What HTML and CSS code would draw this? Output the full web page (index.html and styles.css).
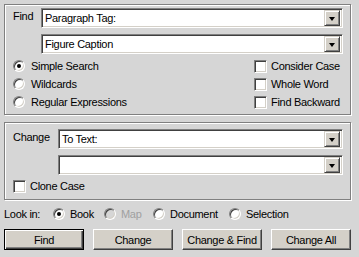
FILE: index.html
```html
<!DOCTYPE html>
<html lang="en">
<head>
    <meta charset="UTF-8">
    <title>Find/Change</title>
    <link rel="stylesheet" href="styles.css">
</head>
<body>
<div class="dialog">

    <div class="group find-group">
        <div class="combo-rows">
            <div class="group-label">Find</div>
            <div class="combo">
                <span class="combo-text">Paragraph Tag:</span>
                <span class="combo-btn"><span class="arrow"></span></span>
            </div>
            <div></div>
            <div class="combo">
                <span class="combo-text">Figure Caption</span>
                <span class="combo-btn"><span class="arrow"></span></span>
            </div>
        </div>

        <div class="options">
            <div class="opt-col">
                <label class="opt"><span class="radio checked"></span>Simple Search</label>
                <label class="opt"><span class="radio"></span>Wildcards</label>
                <label class="opt"><span class="radio"></span>Regular Expressions</label>
            </div>
            <div class="opt-col checks">
                <label class="opt"><span class="check"></span>Consider Case</label>
                <label class="opt"><span class="check"></span>Whole Word</label>
                <label class="opt"><span class="check"></span>Find Backward</label>
            </div>
        </div>
    </div>

    <div class="group change-group">
        <div class="combo-rows wide">
            <div class="group-label">Change</div>
            <div class="combo">
                <span class="combo-text">To Text:</span>
                <span class="combo-btn"><span class="arrow"></span></span>
            </div>
            <div></div>
            <div class="combo">
                <span class="combo-text"></span>
                <span class="combo-btn"><span class="arrow"></span></span>
            </div>
        </div>
        <label class="opt clone"><span class="check"></span>Clone Case</label>
    </div>

    <div class="look-in">
        <span class="look-label">Look in:</span>
        <label class="opt li-book"><span class="radio checked"></span>Book</label>
        <label class="opt li-map disabled"><span class="radio"></span>Map</label>
        <label class="opt li-doc"><span class="radio"></span>Document</label>
        <label class="opt"><span class="radio"></span>Selection</label>
    </div>

    <div class="buttons">
        <button class="btn default">Find</button>
        <button class="btn">Change</button>
        <button class="btn">Change &amp; Find</button>
        <button class="btn">Change All</button>
    </div>

</div>
</body>
</html>
```

FILE: styles.css
```css
body {
    margin: 0;
    background-color: #d6d6d6;
    font-family: 'Liberation Sans', Arial, sans-serif;
    font-size: 11px;
    letter-spacing: -0.3px;
    color: #000;
}

.dialog {
    padding: 4px 8px 0 4px;
}

/* etched group boxes */
.group {
    border: 1px solid #808080;
    box-shadow: inset 1px 1px 0 #fff, 1px 1px 0 #fff;
}

.find-group {
    height: 111px;
    box-sizing: border-box;
    padding: 3px 7px 0 8px;
}

.change-group {
    margin-top: 7px;
    height: 78px;
    box-sizing: border-box;
    padding: 6px 7px 0 8px;
}

.combo-rows {
    display: grid;
    grid-template-columns: 28px 1fr;
    row-gap: 6px;
}

.combo-rows.wide {
    grid-template-columns: 45px 1fr;
}

.group-label {
    padding-top: 2px;
    line-height: 13px;
}

.combo {
    height: 20px;
    box-sizing: border-box;
    border: 1px solid;
    border-color: #808080 #fff #fff #808080;
    box-shadow: inset 1px 1px 0 #404040, inset -1px -1px 0 #d4d0c8;
    background: #fff;
    display: flex;
    align-items: center;
    padding: 2px 2px 2px 3px;
}

.combo-text {
    flex: 1;
    line-height: 14px;
}

.combo-btn {
    width: 16px;
    height: 16px;
    box-sizing: border-box;
    background: #d4d0c8;
    border: 1px solid;
    border-color: #d4d0c8 #404040 #404040 #d4d0c8;
    box-shadow: inset 1px 1px 0 #fff, inset -1px -1px 0 #808080;
    display: flex;
    align-items: center;
    justify-content: center;
}

.arrow {
    width: 0;
    height: 0;
    border-left: 3.5px solid transparent;
    border-right: 3.5px solid transparent;
    border-top: 4px solid #000;
    margin-top: 1px;
}

/* radios and checkboxes */
.options {
    display: flex;
    margin-top: 3px;
}

.opt-col {
    display: flex;
    flex-direction: column;
}

.checks {
    margin-left: auto;
    width: 89px;
}

.opt {
    display: flex;
    align-items: center;
    height: 18px;
    white-space: nowrap;
}

.radio {
    width: 12px;
    height: 12px;
    box-sizing: border-box;
    border-radius: 50%;
    border: 1px solid;
    border-color: #808080 #fff #fff #808080;
    box-shadow: inset 1px 1px 0 #404040, inset -1px -1px 0 #d4d0c8;
    background: #fff;
    margin-right: 6px;
    display: flex;
    align-items: center;
    justify-content: center;
    flex-shrink: 0;
}

.radio.checked::after {
    content: "";
    width: 4px;
    height: 4px;
    border-radius: 50%;
    background: #000;
}

.check {
    width: 13px;
    height: 13px;
    box-sizing: border-box;
    border: 1px solid;
    border-color: #808080 #fff #fff #808080;
    box-shadow: inset 1px 1px 0 #404040, inset -1px -1px 0 #d4d0c8;
    background: #fff;
    margin-right: 4px;
    flex-shrink: 0;
}

.clone {
    margin-top: 2px;
}

.disabled {
    color: #a0a0a0;
}

.disabled .radio {
    background: #d6d6d6;
}

/* look in row */
.look-in {
    display: flex;
    align-items: center;
    height: 18px;
    margin-top: 5px;
}

.look-label {
    width: 49px;
}

.li-book {
    width: 51px;
}

.li-map {
    width: 49px;
}

.li-doc {
    width: 76px;
}

.look-in .radio {
    margin-right: 5px;
}

/* push buttons */
.buttons {
    display: flex;
    justify-content: space-between;
    margin-top: 6px;
}

.btn {
    width: 80px;
    height: 21px;
    padding: 0;
    font-family: inherit;
    font-size: 11px;
    letter-spacing: -0.3px;
    color: #000;
    background: #d4d0c8;
    border: 1px solid;
    border-color: #fff #404040 #404040 #fff;
    box-shadow: inset -1px -1px 0 #808080;
}

.btn.default {
    border: 1px solid #000;
    box-shadow: inset 1px 1px 0 #fff, inset -1px -1px 0 #404040, inset -2px -2px 0 #808080;
}
```
